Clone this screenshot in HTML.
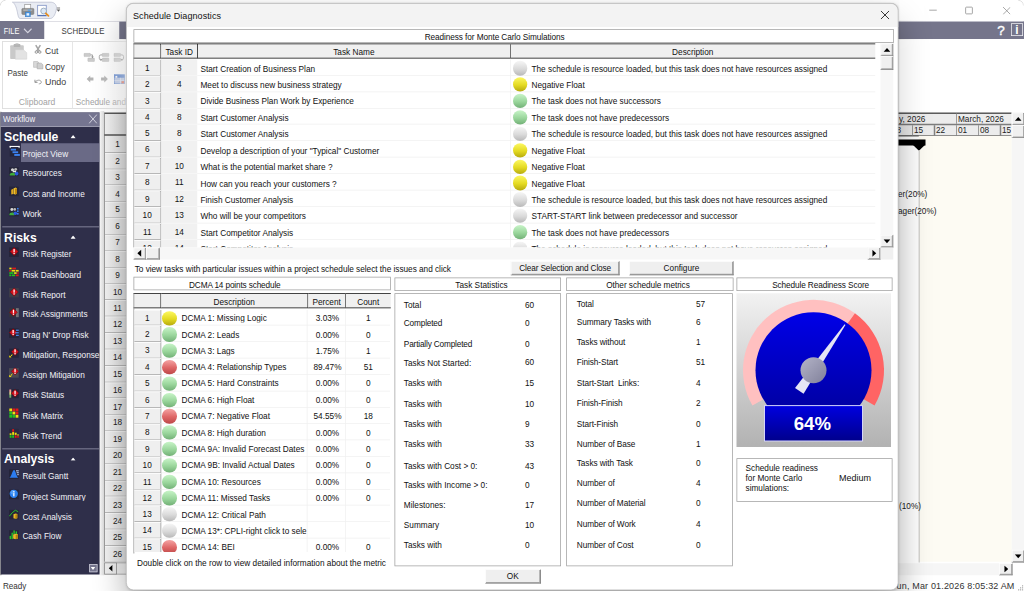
<!DOCTYPE html><html><head><meta charset="utf-8"><title>Schedule Diagnostics</title><style>
*{box-sizing:border-box;margin:0;padding:0}
html,body{width:1024px;height:591px;overflow:hidden;background:#fff}
#root{position:absolute;left:0;top:0;width:1366px;height:788px;transform:scale(0.75);transform-origin:0 0;font-family:"Liberation Sans",sans-serif;font-size:11px;color:#1a1a1a;overflow:hidden;background:#fff}
.a{position:absolute}
.t{position:absolute;white-space:nowrap}
</style></head><body><div id="root">
<div class="a" style="left:0px;top:28px;width:1366.67px;height:24px;background:#75758b"></div>
<div class="a" style="left:58.67px;top:28px;width:100px;height:25px;background:#fff"></div>
<div class="t" style="left:4.8px;top:34.68px;font-size:12.5px;line-height:12.5px;color:#fff;transform:scaleX(0.785);transform-origin:0 50%">FILE</div>
<svg class="a" style="left:31.33px;top:36.67px;" width="12.00" height="8.00" viewBox="0 0 9 6"><path d="M0.7 1 L4.5 5 L8.3 1" fill="none" stroke="#d2d2de" stroke-width="1.1"/></svg>
<div class="t" style="left:81.87px;top:34.68px;font-size:12.5px;line-height:12.5px;color:#3a3a3a;transform:scaleX(0.84);transform-origin:0 50%">SCHEDULE</div>
<div class="t" style="left:1329.73px;top:31.40px;font-size:18px;line-height:18px;color:#fff;-webkit-text-stroke:0.5px #fff">?</div>
<div class="a" style="left:1348px;top:31.07px;width:16px;height:16.8px;border:1px solid #f0f0f4"></div>
<div class="t" style="left:1353.6px;top:32.27px;font-size:16px;line-height:16px;color:#fff;font-weight:bold">i</div>
<div class="a" style="left:58.67px;top:27.6px;width:1306.67px;height:1px;background:#d4d4dc"></div>
<svg class="a" style="left:0px;top:0px;" width="8.00" height="8.00" viewBox="0 0 6 6"><path d="M0.3 5.5 A5.2 5.2 0 0 1 5.5 0.3" fill="none" stroke="#d8d8d8" stroke-width="0.8"/></svg>
<svg class="a" style="left:1357.33px;top:0px;" width="8.00" height="8.00" viewBox="0 0 6 6"><path d="M0.5 0.3 A5.2 5.2 0 0 1 5.7 5.5" fill="none" stroke="#d8d8d8" stroke-width="0.8"/></svg>
<svg class="a" style="left:10.67px;top:0px;" width="80.00" height="28.00" viewBox="0 0 60 21"><path d="M4.2 2.2 H43 C47 2.5 48.6 6 48.2 8.5 C47.6 13 45.5 18.4 42 18.5 H12 C10 18.5 9.8 15 9 11.5 C8 7 6.5 3.2 4.2 2.2 Z" fill="#e9ecf3" stroke="#b4b9cb" stroke-width="0.7"/><rect x="16.5" y="4.6" width="6" height="5" fill="#fff" stroke="#8a8a8a" stroke-width="0.6"/><path d="M13.6 9.4 Q13.6 8.4 14.6 8.4 H24.6 Q25.6 8.4 25.6 9.4 V13.6 Q25.6 14.4 24.8 14.4 H14.4 Q13.6 14.4 13.6 13.6 Z" fill="#8e8e8e" stroke="#6e6e6e" stroke-width="0.5"/><rect x="15" y="9.5" width="9" height="1.3" fill="#b8b8b8"/><rect x="19.5" y="9.6" width="3" height="1.2" fill="#5aa4e8"/><rect x="17" y="12" width="5.2" height="4.8" fill="#4a98e4" stroke="#3070b8" stroke-width="0.4"/><rect x="18.3" y="13.2" width="2.6" height="2.4" fill="#e8f2ff"/><rect x="29.4" y="5.3" width="8.6" height="10.6" fill="#fff" stroke="#7d90c4" stroke-width="0.8"/><rect x="29.4" y="14.9" width="8.6" height="1.1" fill="#5572b4"/><circle cx="35.4" cy="11" r="2.9" fill="#dbe8f6" stroke="#9aaabc" stroke-width="0.9"/><path d="M37.6 13.4 L40.2 15.8" stroke="#e89020" stroke-width="1.8" stroke-linecap="round"/><rect x="48.6" y="7.6" width="3.2" height="0.8" fill="#555"/><path d="M48.4 9.6 H52 L50.2 11.8 Z" fill="#555"/></svg>
<div class="a" style="left:1238.67px;top:13.33px;width:10px;height:1px;background:#8a8a8a"></div>
<div class="a" style="left:1287.07px;top:9.33px;width:10.13px;height:10.13px;border:1px solid #8a8a8a;border-radius:1.5px"></div>
<svg class="a" style="left:1336.67px;top:9.07px;" width="10.67" height="10.67" viewBox="0 0 8 8"><path d="M0.3 0.3 L7.7 7.7 M7.7 0.3 L0.3 7.7" stroke="#8a8a8a" stroke-width="0.75" fill="none"/></svg>
<div class="a" style="left:3.07px;top:55.07px;width:93.6px;height:90px;border:1px solid #d6d6d6;border-right-color:#dedede"></div>
<div class="a" style="left:96.67px;top:55.07px;width:80px;height:90px;border-top:1px solid #d6d6d6;border-bottom:1px solid #d6d6d6"></div>
<svg class="a" style="left:12px;top:57.33px;" width="26.67" height="24.00" viewBox="0 0 20 18"><rect x="1.2" y="2.6" width="13.6" height="13.6" rx="0.8" fill="#c9c9c9"/><rect x="4.6" y="1.2" width="6.8" height="3" rx="0.8" fill="#b4b4b4"/><rect x="6.5" y="0.6" width="3" height="1.4" fill="#bcbcbc"/><path d="M6.3 7 H14.4 L17.8 10 V16.4 H6.3 Z" fill="#e3e3e3" stroke="#cfcfcf" stroke-width="0.5"/></svg>
<svg class="a" style="left:45.33px;top:59.33px;" width="12.00" height="13.33" viewBox="0 0 9 10"><path d="M2 0.8 L5.6 7 M6.6 0.8 L3 7" stroke="#a4a4a4" stroke-width="1.5" fill="none"/><circle cx="2.6" cy="7.8" r="1.25" fill="none" stroke="#8c8c8c" stroke-width="0.9"/><circle cx="6" cy="7.8" r="1.25" fill="none" stroke="#8c8c8c" stroke-width="0.9"/></svg>
<svg class="a" style="left:44px;top:80.67px;" width="14.67" height="12.00" viewBox="0 0 11 9"><path d="M0.6 0.8 H4.6 L6.2 2.3 V6.6 H0.6 Z" fill="#d9d9d9" stroke="#b4b4b4" stroke-width="0.6"/><path d="M4.2 2.4 H8.2 L9.9 4 V8.2 H4.2 Z" fill="#cfcfcf" stroke="#a9a9a9" stroke-width="0.6"/></svg>
<svg class="a" style="left:44.67px;top:104.67px;" width="12.00" height="8.00" viewBox="0 0 9 6"><path d="M1.2 1 V3.6 H3.8" fill="none" stroke="#7a7a7a" stroke-width="0.8"/><path d="M1.4 3.4 C3 1 6.6 0.8 7.4 2.8 C8 4.4 6.6 5.2 5 5.2" fill="none" stroke="#8a8a8a" stroke-width="0.8"/></svg>
<svg class="a" style="left:111.33px;top:70px;" width="16.00" height="14.67" viewBox="0 0 12 11"><rect x="0.7" y="0.8" width="6.4" height="3.3" rx="0.5" fill="#cbcbcb" stroke="#b4b4b4" stroke-width="0.4"/><rect x="4.6" y="5.6" width="6.6" height="3.4" rx="0.5" fill="#cbcbcb" stroke="#b4b4b4" stroke-width="0.4"/><path d="M7.1 2.4 H9.2 V4.4" fill="none" stroke="#9c9c9c" stroke-width="0.9"/><path d="M7.9 4 H10.5 L9.2 5.7 Z" fill="#8c8c8c"/></svg>
<svg class="a" style="left:131.33px;top:70px;" width="16.00" height="14.67" viewBox="0 0 12 11"><rect x="4" y="0.8" width="6.6" height="3.3" rx="0.5" fill="#cbcbcb" stroke="#b4b4b4" stroke-width="0.4"/><rect x="4" y="5.6" width="6.6" height="3.4" rx="0.5" fill="#cbcbcb" stroke="#b4b4b4" stroke-width="0.4"/><path d="M4 2.4 H2.6 Q1 2.4 1 4 V5.8 Q1 7.3 2.6 7.3" fill="none" stroke="#9c9c9c" stroke-width="0.9"/><path d="M2.3 6 V8.6 L4.1 7.3 Z" fill="#8c8c8c"/></svg>
<svg class="a" style="left:151.33px;top:70px;" width="16.00" height="14.67" viewBox="0 0 12 11"><rect x="0.7" y="0.8" width="6.6" height="3.3" rx="0.5" fill="#cbcbcb" stroke="#b4b4b4" stroke-width="0.4"/><rect x="0.7" y="5.6" width="6.6" height="3.4" rx="0.5" fill="#cbcbcb" stroke="#b4b4b4" stroke-width="0.4"/><path d="M7.3 2.4 H8.7 Q10.3 2.4 10.3 4 V5.8 Q10.3 7.3 8.7 7.3" fill="none" stroke="#9c9c9c" stroke-width="0.9"/><path d="M9 6 V8.6 L7.2 7.3 Z" fill="#8c8c8c"/></svg>
<svg class="a" style="left:115.33px;top:100px;" width="10.67" height="10.67" viewBox="0 0 8 8"><path d="M0.4 4 L4 0.6 V2.5 H7.2 V5.5 H4 V7.4 Z" fill="#b4b4b4"/></svg>
<svg class="a" style="left:133.73px;top:100px;" width="10.67" height="10.67" viewBox="0 0 8 8"><path d="M7.4 4 L3.8 0.6 V2.5 H0.6 V5.5 H3.8 V7.4 Z" fill="#b4b4b4"/></svg>
<svg class="a" style="left:152.4px;top:98.67px;" width="14.67" height="13.33" viewBox="0 0 11 10"><rect x="0.3" y="0.3" width="10.2" height="9.2" fill="#b4c4e6" stroke="#4f7cc9" stroke-width="0.6"/><rect x="0.3" y="0.3" width="10.2" height="3.2" fill="#4877cc"/><rect x="1.4" y="1.6" width="1.9" height="1.9" fill="#fff"/><rect x="6" y="3.5" width="0.6" height="6" fill="#e8eefa"/><rect x="0.3" y="6.3" width="10.2" height="0.5" fill="#e8eefa"/><rect x="7.5" y="6.9" width="2.5" height="2.2" fill="#e0644c"/></svg>
<div class="t" style="left:10.4px;top:91.07px;font-size:12px;line-height:12px;color:#3a3a3a;transform:scaleX(0.885);transform-origin:0 50%">Paste</div>
<div class="t" style="left:59.73px;top:61.73px;font-size:12px;line-height:12px;color:#3a3a3a;transform:scaleX(0.953);transform-origin:0 50%">Cut</div>
<div class="t" style="left:59.73px;top:82.53px;font-size:12px;line-height:12px;color:#3a3a3a;transform:scaleX(0.94);transform-origin:0 50%">Copy</div>
<div class="t" style="left:59.73px;top:103.20px;font-size:12px;line-height:12px;color:#3a3a3a;transform:scaleX(0.983);transform-origin:0 50%">Undo</div>
<div class="t" style="left:24.67px;top:129.73px;font-size:12px;line-height:12px;color:#a2a2a2;transform:scaleX(0.948);transform-origin:0 50%">Clipboard</div>
<div class="t" style="left:100.8px;top:129.73px;font-size:12px;line-height:12px;color:#a2a2a2;transform:scaleX(0.913);transform-origin:0 50%">Schedule and</div>
<div class="a" style="left:0px;top:149.33px;width:1.6px;height:617.33px;background:#a4a4a4"></div>
<div class="a" style="left:1.33px;top:150px;width:131.73px;height:616px;background:#2f2f4a"></div>
<div class="a" style="left:1.33px;top:150px;width:131.73px;height:18px;background:#757590"></div>
<div class="a" style="left:1.33px;top:167.87px;width:131.73px;height:1.2px;background:#c2c2d2"></div>
<div class="t" style="left:4px;top:153.83px;font-size:11px;line-height:11px;color:#f4f4f8;transform:scaleX(0.95);transform-origin:0 50%">Workflow</div>
<svg class="a" style="left:118px;top:152px;" width="12.00" height="13.33" viewBox="0 0 9 10"><path d="M0.5 0.5 L8.5 9.5 M8.5 0.5 L0.5 9.5" stroke="#e8e8f0" stroke-width="0.8" fill="none"/></svg>
<div class="t" style="left:5.47px;top:173.98px;font-size:16.3px;line-height:16.3px;color:#fff;font-weight:bold">Schedule</div>
<svg class="a" style="left:93.6px;top:180.4px;" width="6.93" height="4.27" viewBox="0 0 5.2 3.2"><path d="M0 3.2 L2.6 0 L5.2 3.2 Z" fill="#fff"/></svg>
<div class="t" style="left:5.47px;top:307.85px;font-size:16.3px;line-height:16.3px;color:#fff;font-weight:bold">Risks</div>
<svg class="a" style="left:93.6px;top:314.27px;" width="6.93" height="4.27" viewBox="0 0 5.2 3.2"><path d="M0 3.2 L2.6 0 L5.2 3.2 Z" fill="#fff"/></svg>
<div class="t" style="left:5.47px;top:603.45px;font-size:16.3px;line-height:16.3px;color:#fff;font-weight:bold">Analysis</div>
<svg class="a" style="left:93.6px;top:609.87px;" width="6.93" height="4.27" viewBox="0 0 5.2 3.2"><path d="M0 3.2 L2.6 0 L5.2 3.2 Z" fill="#fff"/></svg>
<div class="a" style="left:28.4px;top:190.67px;width:104.93px;height:25.33px;background:#6a6a86"></div>
<div class="a" style="left:2.67px;top:302px;width:129.33px;height:1.2px;background:#9c9cb2"></div>
<div class="a" style="left:2.67px;top:598px;width:129.33px;height:1.2px;background:#9c9cb2"></div>
<div class="t" style="left:29.87px;top:199.57px;font-size:11px;line-height:11px;width:103.2px;color:#f2f2f6;overflow:hidden">Project View</div>
<svg class="a" style="left:11.73px;top:194.23px" width="15" height="15" viewBox="0 0 16 16"><rect x="1" y="3" width="15" height="13" fill="#25253a"/><rect x="1" y="0.5" width="14" height="1.6" fill="#fff"/><rect x="1" y="0.5" width="1.3" height="3.2" fill="#fff"/><rect x="13.7" y="0.5" width="1.3" height="3.2" fill="#fff"/><rect x="2.5" y="4.6" width="7.5" height="2.6" fill="#3c82f0"/><rect x="5" y="8.3" width="8" height="2.6" fill="#3c82f0"/><rect x="7.5" y="12" width="8" height="2.8" fill="#3c82f0"/></svg>
<div class="t" style="left:29.87px;top:226.23px;font-size:11px;line-height:11px;width:103.2px;color:#f2f2f6;overflow:hidden">Resources</div>
<svg class="a" style="left:11.73px;top:221.60px" width="13.6" height="13.6" viewBox="0 0 16 16"><rect x="0" y="1" width="16" height="15" fill="#25253a"/><circle cx="5.5" cy="5" r="2.4" fill="#d8d8d8"/><circle cx="10.5" cy="4.5" r="2.2" fill="#b8b8b8"/><path d="M1 13.5 C1 9 9 8.5 9.5 12 L9.5 14 L1 14 Z" fill="#3fae3a"/><circle cx="12" cy="11" r="3" fill="#2c58e0"/><rect x="6" y="6.5" width="5" height="2.5" fill="#e8e8e8"/></svg>
<div class="t" style="left:29.87px;top:252.90px;font-size:11px;line-height:11px;width:103.2px;color:#f2f2f6;overflow:hidden">Cost and Income</div>
<svg class="a" style="left:11.73px;top:248.27px" width="13.6" height="13.6" viewBox="0 0 16 16"><rect x="0" y="1" width="16" height="15" fill="#25253a"/><path d="M3.5 6 L6.5 4.5 L6.5 12.5 L3.5 13.5 Z" fill="#e0a820"/><path d="M7 4 L10.5 2.5 L12.5 3.5 L12.5 12 L10 13.5 L7 12.5 Z" fill="#f0c030"/><path d="M9.5 4.5 L12.5 3.5 L12.5 12 L9.5 13.5 Z" fill="#b88410"/></svg>
<div class="t" style="left:29.87px;top:279.57px;font-size:11px;line-height:11px;width:103.2px;color:#f2f2f6;overflow:hidden">Work</div>
<svg class="a" style="left:11.73px;top:274.93px" width="13.6" height="13.6" viewBox="0 0 16 16"><rect x="0" y="1" width="16" height="15" fill="#25253a"/><circle cx="4.5" cy="5" r="2.3" fill="#d8d8d8"/><circle cx="9" cy="5" r="2.1" fill="#b8b8b8"/><path d="M0.5 13.5 C0.5 9 8 8.5 8.5 12 L8.5 14 L0.5 14 Z" fill="#3fae3a"/><circle cx="10" cy="11" r="2.8" fill="#2c58e0"/><rect x="12.5" y="2.5" width="3" height="2.6" fill="#3c82f0"/><rect x="12.5" y="6.5" width="3" height="2.6" fill="#3c82f0"/><rect x="12.5" y="10.5" width="3" height="2.6" fill="#3c82f0"/></svg>
<div class="t" style="left:29.87px;top:333.57px;font-size:11px;line-height:11px;width:103.2px;color:#f2f2f6;overflow:hidden">Risk Register</div>
<svg class="a" style="left:11.73px;top:328.93px" width="13.6" height="13.6" viewBox="0 0 16 16"><rect x="0" y="1" width="16" height="15" fill="#25253a"/><path d="M8 1.2000000000000002 L14.3 7.5 L8 13.8 L1.7000000000000002 7.5 Z" fill="#d0101c" stroke="#7a0008" stroke-width="0.8"/><rect x="7" y="3.5" width="2" height="5" fill="#fff"/><rect x="7" y="9.5" width="2" height="2" fill="#fff"/></svg>
<div class="t" style="left:29.87px;top:360.90px;font-size:11px;line-height:11px;width:103.2px;color:#f2f2f6;overflow:hidden">Risk Dashboard</div>
<svg class="a" style="left:11.73px;top:356.27px" width="13.6" height="13.6" viewBox="0 0 16 16"><rect x="0.5" y="1" width="3.5" height="2.6" fill="#f0e010"/><rect x="5" y="1" width="6" height="2.6" fill="#e01818"/><rect x="0.5" y="4.6" width="2.5" height="2.6" fill="#e01818"/><rect x="4" y="4.6" width="6" height="2.6" fill="#f0e010"/><rect x="11" y="4.6" width="4.5" height="2.6" fill="#f0e010"/><rect x="0.5" y="8.2" width="6.5" height="2.6" fill="#20c020"/><rect x="8" y="8.2" width="4" height="2.6" fill="#f0e010"/><rect x="13" y="8.2" width="2.5" height="2.6" fill="#e01818"/><rect x="0.5" y="11.8" width="3" height="2.6" fill="#20c020"/><rect x="4.5" y="11.8" width="5" height="2.6" fill="#20c020"/><rect x="10.5" y="11.8" width="5" height="2.6" fill="#e01818"/></svg>
<div class="t" style="left:29.87px;top:387.57px;font-size:11px;line-height:11px;width:103.2px;color:#f2f2f6;overflow:hidden">Risk Report</div>
<svg class="a" style="left:11.73px;top:382.93px" width="13.6" height="13.6" viewBox="0 0 16 16"><rect x="0" y="1" width="16" height="15" fill="#3c3c48"/><path d="M8 1.2000000000000002 L14.3 7.5 L8 13.8 L1.7000000000000002 7.5 Z" fill="#d0101c" stroke="#7a0008" stroke-width="0.8"/><rect x="7" y="3.5" width="2" height="5" fill="#fff"/><rect x="7" y="9.5" width="2" height="2" fill="#fff"/></svg>
<div class="t" style="left:29.87px;top:414.23px;font-size:11px;line-height:11px;width:103.2px;color:#f2f2f6;overflow:hidden">Risk Assignments</div>
<svg class="a" style="left:11.73px;top:409.60px" width="13.6" height="13.6" viewBox="0 0 16 16"><rect x="0" y="1" width="16" height="15" fill="#34343f"/><rect x="11" y="1" width="5" height="15" fill="#707078"/><path d="M7 1.5 L13 7.5 L7 13.5 L1 7.5 Z" fill="#d0101c" stroke="#7a0008" stroke-width="0.8"/><rect x="6" y="3.5" width="2" height="5" fill="#fff"/><rect x="6" y="9.5" width="2" height="2" fill="#fff"/></svg>
<div class="t" style="left:29.87px;top:441.57px;font-size:11px;line-height:11px;width:103.2px;color:#f2f2f6;overflow:hidden">Drag N' Drop Risk</div>
<svg class="a" style="left:11.73px;top:436.93px" width="13.6" height="13.6" viewBox="0 0 16 16"><rect x="0" y="1" width="16" height="15" fill="#25253a"/><path d="M6.5 1.5 L12.5 7.5 L6.5 13.5 L0.5 7.5 Z" fill="#d0101c" stroke="#7a0008" stroke-width="0.8"/><rect x="5.5" y="3.5" width="2" height="5" fill="#fff"/><rect x="5.5" y="9.5" width="2" height="2" fill="#fff"/><rect x="11" y="3" width="5" height="1.8" fill="#4c8cf4"/><rect x="10" y="7" width="6" height="1.8" fill="#4c8cf4"/><rect x="11" y="11" width="5" height="1.8" fill="#4c8cf4"/></svg>
<div class="t" style="left:29.87px;top:468.23px;font-size:11px;line-height:11px;width:103.2px;color:#f2f2f6;overflow:hidden">Mitigation, Response</div>
<svg class="a" style="left:11.73px;top:463.60px" width="13.6" height="13.6" viewBox="0 0 16 16"><rect x="0" y="1" width="16" height="15" fill="#25253a"/><path d="M9.5 0.40000000000000036 L15.1 6 L9.5 11.6 L3.9000000000000004 6 Z" fill="#d0101c" stroke="#7a0008" stroke-width="0.8"/><rect x="8.5" y="2" width="2" height="5" fill="#fff"/><rect x="8.5" y="8" width="2" height="2" fill="#fff"/><path d="M1 14.5 L6 9.5" stroke="#f0e010" stroke-width="1.6" stroke-dasharray="2 1.2"/><path d="M0.5 11.5 L0.5 15 L4 15 Z" fill="#f0e010"/></svg>
<div class="t" style="left:29.87px;top:494.90px;font-size:11px;line-height:11px;width:103.2px;color:#f2f2f6;overflow:hidden">Assign Mitigation</div>
<svg class="a" style="left:11.73px;top:490.27px" width="13.6" height="13.6" viewBox="0 0 16 16"><rect x="0" y="1" width="16" height="15" fill="#4a4a52"/><path d="M9.5 0.40000000000000036 L15.1 6 L9.5 11.6 L3.9000000000000004 6 Z" fill="#d0101c" stroke="#7a0008" stroke-width="0.8"/><rect x="8.5" y="2" width="2" height="5" fill="#fff"/><rect x="8.5" y="8" width="2" height="2" fill="#fff"/><path d="M1 14.5 L6 9.5" stroke="#f0e010" stroke-width="1.6" stroke-dasharray="2 1.2"/><path d="M0.5 11.5 L0.5 15 L4 15 Z" fill="#f0e010"/></svg>
<div class="t" style="left:29.87px;top:522.23px;font-size:11px;line-height:11px;width:103.2px;color:#f2f2f6;overflow:hidden">Risk Status</div>
<svg class="a" style="left:11.73px;top:517.60px" width="13.6" height="13.6" viewBox="0 0 16 16"><rect x="0" y="1" width="16" height="15" fill="#25253a"/><rect x="0.5" y="1.5" width="3" height="4" fill="#f0a0a0"/><rect x="0.5" y="5.5" width="3" height="4.5" fill="#d8d890"/><rect x="0.5" y="10" width="3" height="4.5" fill="#70b070"/><path d="M9.5 1.5 L15.5 7.5 L9.5 13.5 L3.5 7.5 Z" fill="#d0101c" stroke="#7a0008" stroke-width="0.8"/><rect x="8.5" y="3.5" width="2" height="5" fill="#fff"/><rect x="8.5" y="9.5" width="2" height="2" fill="#fff"/></svg>
<div class="t" style="left:29.87px;top:548.90px;font-size:11px;line-height:11px;width:103.2px;color:#f2f2f6;overflow:hidden">Risk Matrix</div>
<svg class="a" style="left:11.73px;top:544.27px" width="13.6" height="13.6" viewBox="0 0 16 16"><g><rect x="0.5" y="0.8" width="4.4" height="4.4" fill="#f0e010"/><rect x="5.5" y="0.8" width="4.4" height="4.4" fill="#e01818"/><rect x="10.5" y="0.8" width="4.4" height="4.4" fill="#e01818"/><rect x="0.5" y="5.8" width="4.4" height="4.4" fill="#20c020"/><rect x="5.5" y="5.8" width="4.4" height="4.4" fill="#f0e010"/><rect x="10.5" y="5.8" width="4.4" height="4.4" fill="#e01818"/><rect x="0.5" y="10.8" width="4.4" height="4.4" fill="#20c020"/><rect x="5.5" y="10.8" width="4.4" height="4.4" fill="#20c020"/><rect x="10.5" y="10.8" width="4.4" height="4.4" fill="#f0e010"/></g></svg>
<div class="t" style="left:29.87px;top:575.57px;font-size:11px;line-height:11px;width:103.2px;color:#f2f2f6;overflow:hidden">Risk Trend</div>
<svg class="a" style="left:11.73px;top:570.93px" width="13.6" height="13.6" viewBox="0 0 16 16"><rect x="0" y="1" width="16" height="15" fill="#2a2a40"/><rect x="1" y="11" width="3" height="4" fill="#20c020"/><rect x="1" y="8" width="3" height="2.4" fill="#f0e010"/><rect x="5" y="11" width="3" height="4" fill="#20c020"/><rect x="5" y="6" width="3" height="4.4" fill="#f0e010"/><rect x="5" y="1.5" width="3" height="4" fill="#e01818"/><rect x="9" y="11" width="3" height="4" fill="#e01818"/><rect x="9" y="7" width="3" height="3.4" fill="#f0e010"/><rect x="13" y="12" width="3" height="3" fill="#e01818"/><rect x="13" y="9.5" width="3" height="2" fill="#f0e010"/></svg>
<div class="t" style="left:29.87px;top:629.57px;font-size:11px;line-height:11px;width:103.2px;color:#f2f2f6;overflow:hidden">Result Gantt</div>
<svg class="a" style="left:11.73px;top:624.93px" width="13.6" height="13.6" viewBox="0 0 16 16"><rect x="0" y="1" width="16" height="15" fill="#25253a"/><path d="M0.5 14 C4 13.5 5 2 8 2 C10.5 2 11.5 13.5 15 14 Z" fill="#2c7cf0"/><rect x="11" y="2.5" width="5" height="1.6" fill="#cfe0ff"/><rect x="12" y="5.5" width="4" height="1.6" fill="#cfe0ff"/><rect x="13" y="8.5" width="3" height="1.6" fill="#cfe0ff"/></svg>
<div class="t" style="left:29.87px;top:656.90px;font-size:11px;line-height:11px;width:103.2px;color:#f2f2f6;overflow:hidden">Project Summary</div>
<svg class="a" style="left:11.73px;top:652.27px" width="13.6" height="13.6" viewBox="0 0 16 16"><rect x="0" y="1" width="16" height="15" fill="#25253a"/><circle cx="7.5" cy="7.5" r="6.5" fill="#2a80f0"/><circle cx="6" cy="5" r="3.5" fill="#6ab0ff" opacity="0.6"/><rect x="6.6" y="6.5" width="2" height="5" fill="#fff"/><rect x="6.6" y="3.3" width="2" height="2" fill="#fff"/></svg>
<div class="t" style="left:29.87px;top:683.57px;font-size:11px;line-height:11px;width:103.2px;color:#f2f2f6;overflow:hidden">Cost Analysis</div>
<svg class="a" style="left:11.73px;top:678.93px" width="13.6" height="13.6" viewBox="0 0 16 16"><rect x="0" y="1" width="16" height="15" fill="#25253a"/><path d="M7 8 L10.5 6.5 L13 7.5 L13 14 L10 15 L7 14 Z" fill="#e8b828"/><path d="M10 8.5 L13 7.5 L13 14 L10 15 Z" fill="#b08010"/><path d="M0.5 11 L5 5.5 L10 1.5 L14.5 4" fill="none" stroke="#28c828" stroke-width="1.5"/></svg>
<div class="t" style="left:29.87px;top:710.23px;font-size:11px;line-height:11px;width:103.2px;color:#f2f2f6;overflow:hidden">Cash Flow</div>
<svg class="a" style="left:11.73px;top:705.60px" width="13.6" height="13.6" viewBox="0 0 16 16"><rect x="0" y="1" width="16" height="15" fill="#25253a"/><rect x="1" y="10" width="2" height="5.5" fill="#28d028"/><rect x="4" y="5" width="2" height="10.5" fill="#28d028"/><rect x="7" y="1.5" width="2" height="6" fill="#28d028"/><rect x="10.5" y="3" width="2" height="4" fill="#28d028"/><path d="M6.5 8 L10.5 6.5 L14 7.5 L14 14 L10.5 15.5 L6.5 14 Z" fill="#e8b828"/><path d="M10.5 8.5 L14 7.5 L14 14 L10.5 15.5 Z" fill="#b08010"/></svg>
<div class="a" style="left:118.67px;top:752px;width:11.33px;height:11.33px;background:#75758e;border:1px solid #d0d0dc"></div>
<svg class="a" style="left:121.33px;top:756px;" width="6.00" height="4.00" viewBox="0 0 4.5 3"><path d="M0 0 L4.5 0 L2.25 3 Z" fill="#fff"/></svg>
<div class="a" style="left:133.07px;top:148px;width:5.6px;height:618.67px;background:linear-gradient(90deg,#fafafa,#dadada)"></div>
<div class="a" style="left:138.67px;top:150px;width:32px;height:599.33px;background:linear-gradient(90deg,#f4f4f4,#e0e0e0);border-left:1px solid #808080;border-top:2px solid #5a5a5a"></div>
<div class="a" style="left:138.67px;top:179.33px;width:32px;height:1.6px;background:#555"></div>
<div class="t" style="left:142.4px;top:187.10px;font-size:11px;line-height:11px;width:28.67px;text-align:center;color:#222">1</div>
<div class="a" style="left:140px;top:202.8px;width:30.67px;height:1px;background:#a8a8a8"></div>
<div class="a" style="left:140px;top:203.8px;width:30.67px;height:1px;background:#fff"></div>
<div class="t" style="left:142.4px;top:208.94px;font-size:11px;line-height:11px;width:28.67px;text-align:center;color:#222">2</div>
<div class="a" style="left:140px;top:224.64px;width:30.67px;height:1px;background:#a8a8a8"></div>
<div class="a" style="left:140px;top:225.64px;width:30.67px;height:1px;background:#fff"></div>
<div class="t" style="left:142.4px;top:230.78px;font-size:11px;line-height:11px;width:28.67px;text-align:center;color:#222">3</div>
<div class="a" style="left:140px;top:246.48px;width:30.67px;height:1px;background:#a8a8a8"></div>
<div class="a" style="left:140px;top:247.48px;width:30.67px;height:1px;background:#fff"></div>
<div class="t" style="left:142.4px;top:252.62px;font-size:11px;line-height:11px;width:28.67px;text-align:center;color:#222">4</div>
<div class="a" style="left:140px;top:268.32px;width:30.67px;height:1px;background:#a8a8a8"></div>
<div class="a" style="left:140px;top:269.32px;width:30.67px;height:1px;background:#fff"></div>
<div class="t" style="left:142.4px;top:274.46px;font-size:11px;line-height:11px;width:28.67px;text-align:center;color:#222">5</div>
<div class="a" style="left:140px;top:290.16px;width:30.67px;height:1px;background:#a8a8a8"></div>
<div class="a" style="left:140px;top:291.16px;width:30.67px;height:1px;background:#fff"></div>
<div class="t" style="left:142.4px;top:296.30px;font-size:11px;line-height:11px;width:28.67px;text-align:center;color:#222">6</div>
<div class="a" style="left:140px;top:312px;width:30.67px;height:1px;background:#a8a8a8"></div>
<div class="a" style="left:140px;top:313px;width:30.67px;height:1px;background:#fff"></div>
<div class="t" style="left:142.4px;top:318.14px;font-size:11px;line-height:11px;width:28.67px;text-align:center;color:#222">7</div>
<div class="a" style="left:140px;top:333.84px;width:30.67px;height:1px;background:#a8a8a8"></div>
<div class="a" style="left:140px;top:334.84px;width:30.67px;height:1px;background:#fff"></div>
<div class="t" style="left:142.4px;top:339.98px;font-size:11px;line-height:11px;width:28.67px;text-align:center;color:#222">8</div>
<div class="a" style="left:140px;top:355.68px;width:30.67px;height:1px;background:#a8a8a8"></div>
<div class="a" style="left:140px;top:356.68px;width:30.67px;height:1px;background:#fff"></div>
<div class="t" style="left:142.4px;top:361.82px;font-size:11px;line-height:11px;width:28.67px;text-align:center;color:#222">9</div>
<div class="a" style="left:140px;top:377.52px;width:30.67px;height:1px;background:#a8a8a8"></div>
<div class="a" style="left:140px;top:378.52px;width:30.67px;height:1px;background:#fff"></div>
<div class="t" style="left:142.4px;top:383.66px;font-size:11px;line-height:11px;width:28.67px;text-align:center;color:#222">10</div>
<div class="a" style="left:140px;top:399.36px;width:30.67px;height:1px;background:#a8a8a8"></div>
<div class="a" style="left:140px;top:400.36px;width:30.67px;height:1px;background:#fff"></div>
<div class="t" style="left:142.4px;top:405.50px;font-size:11px;line-height:11px;width:28.67px;text-align:center;color:#222">11</div>
<div class="a" style="left:140px;top:421.2px;width:30.67px;height:1px;background:#a8a8a8"></div>
<div class="a" style="left:140px;top:422.2px;width:30.67px;height:1px;background:#fff"></div>
<div class="t" style="left:142.4px;top:427.34px;font-size:11px;line-height:11px;width:28.67px;text-align:center;color:#222">12</div>
<div class="a" style="left:140px;top:443.04px;width:30.67px;height:1px;background:#a8a8a8"></div>
<div class="a" style="left:140px;top:444.04px;width:30.67px;height:1px;background:#fff"></div>
<div class="t" style="left:142.4px;top:449.18px;font-size:11px;line-height:11px;width:28.67px;text-align:center;color:#222">13</div>
<div class="a" style="left:140px;top:464.88px;width:30.67px;height:1px;background:#a8a8a8"></div>
<div class="a" style="left:140px;top:465.88px;width:30.67px;height:1px;background:#fff"></div>
<div class="t" style="left:142.4px;top:471.02px;font-size:11px;line-height:11px;width:28.67px;text-align:center;color:#222">14</div>
<div class="a" style="left:140px;top:486.72px;width:30.67px;height:1px;background:#a8a8a8"></div>
<div class="a" style="left:140px;top:487.72px;width:30.67px;height:1px;background:#fff"></div>
<div class="t" style="left:142.4px;top:492.86px;font-size:11px;line-height:11px;width:28.67px;text-align:center;color:#222">15</div>
<div class="a" style="left:140px;top:508.56px;width:30.67px;height:1px;background:#a8a8a8"></div>
<div class="a" style="left:140px;top:509.56px;width:30.67px;height:1px;background:#fff"></div>
<div class="t" style="left:142.4px;top:514.70px;font-size:11px;line-height:11px;width:28.67px;text-align:center;color:#222">16</div>
<div class="a" style="left:140px;top:530.4px;width:30.67px;height:1px;background:#a8a8a8"></div>
<div class="a" style="left:140px;top:531.4px;width:30.67px;height:1px;background:#fff"></div>
<div class="t" style="left:142.4px;top:536.54px;font-size:11px;line-height:11px;width:28.67px;text-align:center;color:#222">17</div>
<div class="a" style="left:140px;top:552.24px;width:30.67px;height:1px;background:#a8a8a8"></div>
<div class="a" style="left:140px;top:553.24px;width:30.67px;height:1px;background:#fff"></div>
<div class="t" style="left:142.4px;top:558.38px;font-size:11px;line-height:11px;width:28.67px;text-align:center;color:#222">18</div>
<div class="a" style="left:140px;top:574.08px;width:30.67px;height:1px;background:#a8a8a8"></div>
<div class="a" style="left:140px;top:575.08px;width:30.67px;height:1px;background:#fff"></div>
<div class="t" style="left:142.4px;top:580.22px;font-size:11px;line-height:11px;width:28.67px;text-align:center;color:#222">19</div>
<div class="a" style="left:140px;top:595.92px;width:30.67px;height:1px;background:#a8a8a8"></div>
<div class="a" style="left:140px;top:596.92px;width:30.67px;height:1px;background:#fff"></div>
<div class="t" style="left:142.4px;top:602.06px;font-size:11px;line-height:11px;width:28.67px;text-align:center;color:#222">20</div>
<div class="a" style="left:140px;top:617.76px;width:30.67px;height:1px;background:#a8a8a8"></div>
<div class="a" style="left:140px;top:618.76px;width:30.67px;height:1px;background:#fff"></div>
<div class="t" style="left:142.4px;top:623.90px;font-size:11px;line-height:11px;width:28.67px;text-align:center;color:#222">21</div>
<div class="a" style="left:140px;top:639.6px;width:30.67px;height:1px;background:#a8a8a8"></div>
<div class="a" style="left:140px;top:640.6px;width:30.67px;height:1px;background:#fff"></div>
<div class="t" style="left:142.4px;top:645.74px;font-size:11px;line-height:11px;width:28.67px;text-align:center;color:#222">22</div>
<div class="a" style="left:140px;top:661.44px;width:30.67px;height:1px;background:#a8a8a8"></div>
<div class="a" style="left:140px;top:662.44px;width:30.67px;height:1px;background:#fff"></div>
<div class="t" style="left:142.4px;top:667.58px;font-size:11px;line-height:11px;width:28.67px;text-align:center;color:#222">23</div>
<div class="a" style="left:140px;top:683.28px;width:30.67px;height:1px;background:#a8a8a8"></div>
<div class="a" style="left:140px;top:684.28px;width:30.67px;height:1px;background:#fff"></div>
<div class="t" style="left:142.4px;top:689.42px;font-size:11px;line-height:11px;width:28.67px;text-align:center;color:#222">24</div>
<div class="a" style="left:140px;top:705.12px;width:30.67px;height:1px;background:#a8a8a8"></div>
<div class="a" style="left:140px;top:706.12px;width:30.67px;height:1px;background:#fff"></div>
<div class="t" style="left:142.4px;top:711.26px;font-size:11px;line-height:11px;width:28.67px;text-align:center;color:#222">25</div>
<div class="a" style="left:140px;top:726.96px;width:30.67px;height:1px;background:#a8a8a8"></div>
<div class="a" style="left:140px;top:727.96px;width:30.67px;height:1px;background:#fff"></div>
<div class="t" style="left:142.4px;top:733.10px;font-size:11px;line-height:11px;width:28.67px;text-align:center;color:#222">26</div>
<div class="a" style="left:140px;top:748.8px;width:30.67px;height:1px;background:#a8a8a8"></div>
<div class="a" style="left:140px;top:749.8px;width:30.67px;height:1px;background:#fff"></div>
<div class="a" style="left:138.67px;top:749.6px;width:32px;height:16.4px;background:#f0f0f0;border:1px solid #a0a0a0"></div>
<div class="a" style="left:138.67px;top:749.6px;width:17.73px;height:16.4px;background:#f0f0f0;border:1px solid #8a8a8a"></div>
<svg class="a" style="left:144.67px;top:753.33px;" width="5.33" height="9.33" viewBox="0 0 4 7"><path d="M4 0 L0 3.5 L4 7 Z" fill="#000"/></svg>
<div class="a" style="left:1194.67px;top:150px;width:154.67px;height:31.6px;background:#ececec;border-top:2px solid #5c5c5c;border-bottom:2px solid #6a6a6a"></div>
<div class="a" style="left:1194.67px;top:165.33px;width:154.67px;height:1.2px;background:#7c7c7c"></div>
<div class="a" style="left:1224.67px;top:181.33px;width:124.67px;height:568px;background:#fdfbf3"></div>
<div class="t" style="left:1198.67px;top:152.50px;font-size:11px;line-height:11px;color:#222">y, 2026</div>
<div class="t" style="left:1277.33px;top:152.50px;font-size:11px;line-height:11px;color:#222">March, 2026</div>
<div class="a" style="left:1274.67px;top:151.33px;width:1.2px;height:14px;background:#808080"></div>
<div class="t" style="left:1195.47px;top:167.83px;font-size:11px;line-height:11px;color:#222">8</div>
<div class="t" style="left:1218.67px;top:167.83px;font-size:11px;line-height:11px;color:#222">15</div>
<div class="t" style="left:1248px;top:167.83px;font-size:11px;line-height:11px;color:#222">22</div>
<div class="t" style="left:1277.33px;top:167.83px;font-size:11px;line-height:11px;color:#222">01</div>
<div class="t" style="left:1306.67px;top:167.83px;font-size:11px;line-height:11px;color:#222">08</div>
<div class="t" style="left:1336px;top:167.83px;font-size:11px;line-height:11px;color:#222">15</div>
<div class="a" style="left:1216px;top:166.67px;width:1.2px;height:14px;background:#808080"></div>
<div class="a" style="left:1245.33px;top:166.67px;width:1.2px;height:14px;background:#808080"></div>
<div class="a" style="left:1274.67px;top:166.67px;width:1.2px;height:14px;background:#808080"></div>
<div class="a" style="left:1304px;top:166.67px;width:1.2px;height:14px;background:#808080"></div>
<div class="a" style="left:1333.33px;top:166.67px;width:1.2px;height:14px;background:#808080"></div>
<div class="a" style="left:1194.67px;top:186.13px;width:38.93px;height:7.47px;background:#000"></div>
<svg class="a" style="left:1217.33px;top:193.33px;" width="16.53" height="8.00" viewBox="0 0 12.4 6"><path d="M0 0 H12.4 L6.2 6 Z" fill="#000"/></svg>
<div class="a" style="left:1225.07px;top:201.33px;width:1px;height:548.67px;background:#b0b0b0"></div>
<div class="t" style="left:1197.33px;top:253.17px;font-size:11px;line-height:11px;color:#222">er(20%)</div>
<div class="t" style="left:1197.33px;top:275.83px;font-size:11px;line-height:11px;color:#222">ager(20%)</div>
<div class="t" style="left:1198.67px;top:668.63px;font-size:11px;line-height:11px;color:#222">(10%)</div>
<div class="a" style="left:1349.33px;top:150px;width:16.67px;height:600px;background:#f6f6f6"></div>
<div class="a" style="left:1349.33px;top:150px;width:16.67px;height:16.67px;background:#f0f0f0;border:1px solid #fff;border-right-color:#777;border-bottom-color:#777;box-shadow:inset -1px -1px 0 #a8a8a8"></div>
<svg class="a" style="left:1353.07px;top:156px;" width="9.33" height="5.33" viewBox="0 0 7 4"><path d="M0 4 L3.5 0 L7 4 Z" fill="#000"/></svg>
<div class="a" style="left:1349.33px;top:166.67px;width:16.67px;height:17.33px;background:#f0f0f0;border:1px solid #fff;border-right-color:#777;border-bottom-color:#777;box-shadow:inset -1px -1px 0 #a8a8a8"></div>
<div class="a" style="left:1349.33px;top:733.33px;width:16.67px;height:16.53px;background:#f0f0f0;border:1px solid #fff;border-right-color:#777;border-bottom-color:#777;box-shadow:inset -1px -1px 0 #a8a8a8"></div>
<svg class="a" style="left:1353.07px;top:739.47px;" width="9.33" height="5.33" viewBox="0 0 7 4"><path d="M0 0 L3.5 4 L7 0 Z" fill="#000"/></svg>
<div class="a" style="left:1194.67px;top:750.67px;width:154.67px;height:16px;background:#f6f6f6"></div>
<div class="a" style="left:1332.27px;top:750.67px;width:17.33px;height:16px;background:#f0f0f0;border:1px solid #fff;border-right-color:#777;border-bottom-color:#777;box-shadow:inset -1px -1px 0 #a8a8a8"></div>
<svg class="a" style="left:1338.67px;top:754.13px;" width="5.33" height="9.33" viewBox="0 0 4 7"><path d="M0 0 L4 3.5 L0 7 Z" fill="#000"/></svg>
<div class="t" style="left:3.87px;top:775.07px;font-size:12px;line-height:12px;color:#333;transform:scaleX(0.9);transform-origin:0 50%">Ready</div>
<div class="t" style="left:1195.47px;top:774.53px;font-size:12px;line-height:12px;color:#333;letter-spacing:0.22px">un, Mar 01.2026 8:05:32 AM</div>
<svg class="a" style="left:1356px;top:778.67px;" width="9.33" height="9.33" viewBox="0 0 7 7"><rect x="5" y="1" width="1.2" height="1.2" fill="#aaa"/><rect x="3" y="3" width="1.2" height="1.2" fill="#aaa"/><rect x="5" y="3" width="1.2" height="1.2" fill="#aaa"/><rect x="1" y="5" width="1.2" height="1.2" fill="#aaa"/><rect x="3" y="5" width="1.2" height="1.2" fill="#aaa"/><rect x="5" y="5" width="1.2" height="1.2" fill="#aaa"/></svg>
<div class="a" style="left:168.27px;top:4.27px;width:1029.87px;height:782.53px;background:#fff;border:1px solid #bdbdbd;border-radius:10px;box-shadow:0 22px 44px rgba(0,0,0,0.33),0 0 3px rgba(0,0,0,0.14);overflow:hidden"></div>
<div class="a" style="left:168.27px;top:4.27px;width:1029.87px;height:31.47px;background:#f3f3f3;border:1px solid #bdbdbd;border-bottom:none;border-radius:10px 10px 0 0"></div>
<div class="a" style="left:133.33px;top:53.07px;width:34.93px;height:95.6px;background:linear-gradient(90deg,rgba(255,255,255,0),rgba(255,255,255,0.45))"></div>
<div class="a" style="left:1198.67px;top:53.07px;width:80px;height:95.6px;background:rgba(255,255,255,0.5)"></div>
<div class="a" style="left:1198.67px;top:0px;width:34.67px;height:27.33px;background:rgba(255,255,255,0.5)"></div>
<div class="t" style="left:177.33px;top:14.67px;font-size:12px;line-height:12px;color:#111;letter-spacing:0.1px">Schedule Diagnostics</div>
<svg class="a" style="left:1174px;top:14px;" width="12.00" height="12.00" viewBox="0 0 9 9"><path d="M0.4 0.4 L8.6 8.6 M8.6 0.4 L0.4 8.6" stroke="#222" stroke-width="0.9" fill="none"/></svg>
<div class="a" style="left:178px;top:39.07px;width:1014px;height:18px;border:1px solid #a0a0a0;background:#fff"></div>
<div class="t" style="left:459.47px;top:44.30px;font-size:11px;line-height:11px;width:400px;text-align:center;color:#111;letter-spacing:-0.12px;">Readiness for Monte Carlo Simulations</div>
<div class="a" style="left:178px;top:58px;width:36.93px;height:20.27px;background:#f0f0f0;border-top:1px solid #0a0a0a;border-bottom:1px solid #0a0a0a;border-right:1px solid #111;text-align:center;font-size:11px;line-height:20.5px;color:#111"></div>
<div class="a" style="left:214.93px;top:58px;width:49.07px;height:20.27px;background:#f0f0f0;border-top:1px solid #0a0a0a;border-bottom:1px solid #0a0a0a;border-right:1px solid #111;text-align:center;font-size:11px;line-height:20.5px;color:#111">Task ID</div>
<div class="a" style="left:264px;top:58px;width:416.67px;height:20.27px;background:#f0f0f0;border-top:1px solid #0a0a0a;border-bottom:1px solid #0a0a0a;border-right:1px solid #111;text-align:center;font-size:11px;line-height:20.5px;color:#111">Task Name</div>
<div class="a" style="left:680.67px;top:58px;width:486px;height:20.27px;background:#f0f0f0;border-top:1px solid #0a0a0a;border-bottom:1px solid #0a0a0a;border-right:none;text-align:center;font-size:11px;line-height:20.5px;color:#111">Description</div>
<div class="a" style="left:178px;top:58px;width:1px;height:273.33px;background:#8c8c8c"></div>
<div class="a" style="left:178.67px;top:79px;width:990.67px;height:251px;overflow:hidden">
<div class="a" style="left:0;top:0.00px;width:36.27px;height:21.87px;background:#efefef;border-right:1px solid #9a9a9a;border-bottom:1px solid #a4a4a4;border-top:1px solid #fff;text-align:center;font-size:11px;line-height:20px;color:#111">1</div>
<div class="a" style="left:36.27px;top:0.00px;width:48.4px;height:21.87px;background:#f1f1f1;border-bottom:1px solid #f7f7f7;text-align:center;font-size:11px;line-height:23.5px;color:#111">3</div>
<div class="a" style="left:84.67px;top:20.87px;width:903.33px;height:1px;background:#f0f0f0"></div>
<div class="t" style="left:88.67px;top:6.50px;font-size:11px;line-height:12px;color:#111">Start Creation of Business Plan</div>
<div class="t" style="left:530px;top:6.50px;font-size:11px;line-height:12px;color:#111">The schedule is resource loaded, but this task does not have resources assigned</div>
<div class="a" style="left:0;top:21.87px;width:36.27px;height:21.87px;background:#efefef;border-right:1px solid #9a9a9a;border-bottom:1px solid #a4a4a4;border-top:1px solid #fff;text-align:center;font-size:11px;line-height:20px;color:#111">2</div>
<div class="a" style="left:36.27px;top:21.87px;width:48.4px;height:21.87px;background:#f1f1f1;border-bottom:1px solid #f7f7f7;text-align:center;font-size:11px;line-height:23.5px;color:#111">4</div>
<div class="a" style="left:84.67px;top:42.73px;width:903.33px;height:1px;background:#f0f0f0"></div>
<div class="t" style="left:88.67px;top:28.37px;font-size:11px;line-height:12px;color:#111">Meet to discuss new business strategy</div>
<div class="t" style="left:530px;top:28.37px;font-size:11px;line-height:12px;color:#111">Negative Float</div>
<div class="a" style="left:0;top:43.73px;width:36.27px;height:21.87px;background:#efefef;border-right:1px solid #9a9a9a;border-bottom:1px solid #a4a4a4;border-top:1px solid #fff;text-align:center;font-size:11px;line-height:20px;color:#111">3</div>
<div class="a" style="left:36.27px;top:43.73px;width:48.4px;height:21.87px;background:#f1f1f1;border-bottom:1px solid #f7f7f7;text-align:center;font-size:11px;line-height:23.5px;color:#111">5</div>
<div class="a" style="left:84.67px;top:64.60px;width:903.33px;height:1px;background:#f0f0f0"></div>
<div class="t" style="left:88.67px;top:50.23px;font-size:11px;line-height:12px;color:#111">Divide Business Plan Work by Experience</div>
<div class="t" style="left:530px;top:50.23px;font-size:11px;line-height:12px;color:#111">The task does not have successors</div>
<div class="a" style="left:0;top:65.60px;width:36.27px;height:21.87px;background:#efefef;border-right:1px solid #9a9a9a;border-bottom:1px solid #a4a4a4;border-top:1px solid #fff;text-align:center;font-size:11px;line-height:20px;color:#111">4</div>
<div class="a" style="left:36.27px;top:65.60px;width:48.4px;height:21.87px;background:#f1f1f1;border-bottom:1px solid #f7f7f7;text-align:center;font-size:11px;line-height:23.5px;color:#111">8</div>
<div class="a" style="left:84.67px;top:86.47px;width:903.33px;height:1px;background:#f0f0f0"></div>
<div class="t" style="left:88.67px;top:72.10px;font-size:11px;line-height:12px;color:#111">Start Customer Analysis</div>
<div class="t" style="left:530px;top:72.10px;font-size:11px;line-height:12px;color:#111">The task does not have predecessors</div>
<div class="a" style="left:0;top:87.47px;width:36.27px;height:21.87px;background:#efefef;border-right:1px solid #9a9a9a;border-bottom:1px solid #a4a4a4;border-top:1px solid #fff;text-align:center;font-size:11px;line-height:20px;color:#111">5</div>
<div class="a" style="left:36.27px;top:87.47px;width:48.4px;height:21.87px;background:#f1f1f1;border-bottom:1px solid #f7f7f7;text-align:center;font-size:11px;line-height:23.5px;color:#111">8</div>
<div class="a" style="left:84.67px;top:108.33px;width:903.33px;height:1px;background:#f0f0f0"></div>
<div class="t" style="left:88.67px;top:93.97px;font-size:11px;line-height:12px;color:#111">Start Customer Analysis</div>
<div class="t" style="left:530px;top:93.97px;font-size:11px;line-height:12px;color:#111">The schedule is resource loaded, but this task does not have resources assigned</div>
<div class="a" style="left:0;top:109.33px;width:36.27px;height:21.87px;background:#efefef;border-right:1px solid #9a9a9a;border-bottom:1px solid #a4a4a4;border-top:1px solid #fff;text-align:center;font-size:11px;line-height:20px;color:#111">6</div>
<div class="a" style="left:36.27px;top:109.33px;width:48.4px;height:21.87px;background:#f1f1f1;border-bottom:1px solid #f7f7f7;text-align:center;font-size:11px;line-height:23.5px;color:#111">9</div>
<div class="a" style="left:84.67px;top:130.20px;width:903.33px;height:1px;background:#f0f0f0"></div>
<div class="t" style="left:88.67px;top:115.83px;font-size:11px;line-height:12px;color:#111">Develop a description of your "Typical" Customer</div>
<div class="t" style="left:530px;top:115.83px;font-size:11px;line-height:12px;color:#111">Negative Float</div>
<div class="a" style="left:0;top:131.20px;width:36.27px;height:21.87px;background:#efefef;border-right:1px solid #9a9a9a;border-bottom:1px solid #a4a4a4;border-top:1px solid #fff;text-align:center;font-size:11px;line-height:20px;color:#111">7</div>
<div class="a" style="left:36.27px;top:131.20px;width:48.4px;height:21.87px;background:#f1f1f1;border-bottom:1px solid #f7f7f7;text-align:center;font-size:11px;line-height:23.5px;color:#111">10</div>
<div class="a" style="left:84.67px;top:152.07px;width:903.33px;height:1px;background:#f0f0f0"></div>
<div class="t" style="left:88.67px;top:137.70px;font-size:11px;line-height:12px;color:#111">What is the potential market share ?</div>
<div class="t" style="left:530px;top:137.70px;font-size:11px;line-height:12px;color:#111">Negative Float</div>
<div class="a" style="left:0;top:153.07px;width:36.27px;height:21.87px;background:#efefef;border-right:1px solid #9a9a9a;border-bottom:1px solid #a4a4a4;border-top:1px solid #fff;text-align:center;font-size:11px;line-height:20px;color:#111">8</div>
<div class="a" style="left:36.27px;top:153.07px;width:48.4px;height:21.87px;background:#f1f1f1;border-bottom:1px solid #f7f7f7;text-align:center;font-size:11px;line-height:23.5px;color:#111">11</div>
<div class="a" style="left:84.67px;top:173.93px;width:903.33px;height:1px;background:#f0f0f0"></div>
<div class="t" style="left:88.67px;top:159.57px;font-size:11px;line-height:12px;color:#111">How can you reach your customers ?</div>
<div class="t" style="left:530px;top:159.57px;font-size:11px;line-height:12px;color:#111">Negative Float</div>
<div class="a" style="left:0;top:174.93px;width:36.27px;height:21.87px;background:#efefef;border-right:1px solid #9a9a9a;border-bottom:1px solid #a4a4a4;border-top:1px solid #fff;text-align:center;font-size:11px;line-height:20px;color:#111">9</div>
<div class="a" style="left:36.27px;top:174.93px;width:48.4px;height:21.87px;background:#f1f1f1;border-bottom:1px solid #f7f7f7;text-align:center;font-size:11px;line-height:23.5px;color:#111">12</div>
<div class="a" style="left:84.67px;top:195.80px;width:903.33px;height:1px;background:#f0f0f0"></div>
<div class="t" style="left:88.67px;top:181.43px;font-size:11px;line-height:12px;color:#111">Finish Customer Analysis</div>
<div class="t" style="left:530px;top:181.43px;font-size:11px;line-height:12px;color:#111">The schedule is resource loaded, but this task does not have resources assigned</div>
<div class="a" style="left:0;top:196.80px;width:36.27px;height:21.87px;background:#efefef;border-right:1px solid #9a9a9a;border-bottom:1px solid #a4a4a4;border-top:1px solid #fff;text-align:center;font-size:11px;line-height:20px;color:#111">10</div>
<div class="a" style="left:36.27px;top:196.80px;width:48.4px;height:21.87px;background:#f1f1f1;border-bottom:1px solid #f7f7f7;text-align:center;font-size:11px;line-height:23.5px;color:#111">13</div>
<div class="a" style="left:84.67px;top:217.67px;width:903.33px;height:1px;background:#f0f0f0"></div>
<div class="t" style="left:88.67px;top:203.30px;font-size:11px;line-height:12px;color:#111">Who will be your competitors</div>
<div class="t" style="left:530px;top:203.30px;font-size:11px;line-height:12px;color:#111">START-START link between predecessor and successor</div>
<div class="a" style="left:0;top:218.67px;width:36.27px;height:21.87px;background:#efefef;border-right:1px solid #9a9a9a;border-bottom:1px solid #a4a4a4;border-top:1px solid #fff;text-align:center;font-size:11px;line-height:20px;color:#111">11</div>
<div class="a" style="left:36.27px;top:218.67px;width:48.4px;height:21.87px;background:#f1f1f1;border-bottom:1px solid #f7f7f7;text-align:center;font-size:11px;line-height:23.5px;color:#111">14</div>
<div class="a" style="left:84.67px;top:239.53px;width:903.33px;height:1px;background:#f0f0f0"></div>
<div class="t" style="left:88.67px;top:225.17px;font-size:11px;line-height:12px;color:#111">Start Competitor Analysis</div>
<div class="t" style="left:530px;top:225.17px;font-size:11px;line-height:12px;color:#111">The task does not have predecessors</div>
<div class="a" style="left:0;top:240.53px;width:36.27px;height:21.87px;background:#efefef;border-right:1px solid #9a9a9a;border-bottom:1px solid #a4a4a4;border-top:1px solid #fff;text-align:center;font-size:11px;line-height:20px;color:#111">12</div>
<div class="a" style="left:36.27px;top:240.53px;width:48.4px;height:21.87px;background:#f1f1f1;border-bottom:1px solid #f7f7f7;text-align:center;font-size:11px;line-height:23.5px;color:#111">14</div>
<div class="a" style="left:84.67px;top:261.40px;width:903.33px;height:1px;background:#f0f0f0"></div>
<div class="t" style="left:88.67px;top:247.03px;font-size:11px;line-height:12px;color:#111">Start Competitor Analysis</div>
<div class="t" style="left:530px;top:247.03px;font-size:11px;line-height:12px;color:#111">The schedule is resource loaded, but this task does not have resources assigned</div>
<div class="a" style="left:501.33px;top:0;width:1px;height:300px;background:#f0f0f0"></div>
</div>
<div class="a" style="left:683.73px;top:81.4px;width:19.2px;height:19.2px;border-radius:50%;background:linear-gradient(180deg,#f6f6f6 0%,#dadada 55%,#b8b8b8 100%)"></div>
<div class="a" style="left:683.73px;top:103.27px;width:19.2px;height:19.2px;border-radius:50%;background:linear-gradient(180deg,#fcf862 0%,#e4da22 55%,#b6aa0e 100%)"></div>
<div class="a" style="left:683.73px;top:125.13px;width:19.2px;height:19.2px;border-radius:50%;background:linear-gradient(180deg,#c8f4c8 0%,#9ad69c 55%,#72b076 100%)"></div>
<div class="a" style="left:683.73px;top:147px;width:19.2px;height:19.2px;border-radius:50%;background:linear-gradient(180deg,#c8f4c8 0%,#9ad69c 55%,#72b076 100%)"></div>
<div class="a" style="left:683.73px;top:168.87px;width:19.2px;height:19.2px;border-radius:50%;background:linear-gradient(180deg,#f6f6f6 0%,#dadada 55%,#b8b8b8 100%)"></div>
<div class="a" style="left:683.73px;top:190.73px;width:19.2px;height:19.2px;border-radius:50%;background:linear-gradient(180deg,#fcf862 0%,#e4da22 55%,#b6aa0e 100%)"></div>
<div class="a" style="left:683.73px;top:212.6px;width:19.2px;height:19.2px;border-radius:50%;background:linear-gradient(180deg,#fcf862 0%,#e4da22 55%,#b6aa0e 100%)"></div>
<div class="a" style="left:683.73px;top:234.47px;width:19.2px;height:19.2px;border-radius:50%;background:linear-gradient(180deg,#fcf862 0%,#e4da22 55%,#b6aa0e 100%)"></div>
<div class="a" style="left:683.73px;top:256.33px;width:19.2px;height:19.2px;border-radius:50%;background:linear-gradient(180deg,#f6f6f6 0%,#dadada 55%,#b8b8b8 100%)"></div>
<div class="a" style="left:683.73px;top:278.2px;width:19.2px;height:19.2px;border-radius:50%;background:linear-gradient(180deg,#f6f6f6 0%,#dadada 55%,#b8b8b8 100%)"></div>
<div class="a" style="left:683.73px;top:300.07px;width:19.2px;height:19.2px;border-radius:50%;background:linear-gradient(180deg,#c8f4c8 0%,#9ad69c 55%,#72b076 100%)"></div>
<div class="a" style="left:683.73px;top:321.93px;width:19.2px;height:8.07px;overflow:hidden"><div class="a" style="left:0;top:0;width:19.2px;height:19.2px;border-radius:50%;background:linear-gradient(180deg,#f6f6f6 0%,#dadada 55%,#b8b8b8 100%)"></div></div>
<div class="a" style="left:1174.27px;top:57.87px;width:16.4px;height:272px;background:#f7f7f7"></div>
<div class="a" style="left:1174.27px;top:57.87px;width:16.4px;height:16.8px;background:#f0f0f0;border:1px solid #fff;border-right-color:#777;border-bottom-color:#777;box-shadow:inset -1px -1px 0 #a8a8a8"></div>
<svg class="a" style="left:1178px;top:64px;" width="9.33" height="5.33" viewBox="0 0 7 4"><path d="M0 4 L3.5 0 L7 4 Z" fill="#000"/></svg>
<div class="a" style="left:1174.27px;top:74.67px;width:16.4px;height:18px;background:#f0f0f0;border:1px solid #fff;border-right-color:#777;border-bottom-color:#777;box-shadow:inset -1px -1px 0 #a8a8a8"></div>
<div class="a" style="left:1174.27px;top:312.93px;width:16.4px;height:16.8px;background:#f0f0f0;border:1px solid #fff;border-right-color:#777;border-bottom-color:#777;box-shadow:inset -1px -1px 0 #a8a8a8"></div>
<svg class="a" style="left:1178px;top:319.33px;" width="9.33" height="5.33" viewBox="0 0 7 4"><path d="M0 0 L3.5 4 L7 0 Z" fill="#000"/></svg>
<div class="a" style="left:178px;top:330px;width:996px;height:16px;background:#f7f7f7"></div>
<div class="a" style="left:178px;top:330px;width:17.33px;height:16px;background:#f0f0f0;border:1px solid #fff;border-right-color:#777;border-bottom-color:#777;box-shadow:inset -1px -1px 0 #a8a8a8"></div>
<svg class="a" style="left:183.33px;top:333.33px;" width="5.33" height="9.33" viewBox="0 0 4 7"><path d="M4 0 L0 3.5 L4 7 Z" fill="#000"/></svg>
<div class="a" style="left:195.33px;top:330px;width:17.73px;height:16px;background:#f0f0f0;border:1px solid #fff;border-right-color:#777;border-bottom-color:#777;box-shadow:inset -1px -1px 0 #a8a8a8"></div>
<div class="a" style="left:1156.67px;top:330px;width:17.33px;height:16px;background:#f0f0f0;border:1px solid #fff;border-right-color:#777;border-bottom-color:#777;box-shadow:inset -1px -1px 0 #a8a8a8"></div>
<svg class="a" style="left:1163.33px;top:333.33px;" width="5.33" height="9.33" viewBox="0 0 4 7"><path d="M0 0 L4 3.5 L0 7 Z" fill="#000"/></svg>
<div class="a" style="left:1174.27px;top:330px;width:16.4px;height:16px;background:#f0f0f0"></div>
<div class="t" style="left:179.6px;top:353.17px;font-size:11px;line-height:11px;color:#111;letter-spacing:-0.03px">To view tasks with particular issues within a project schedule select the issues and click</div>
<div class="a" style="left:681.33px;top:348px;width:144.4px;height:18.67px;background:#efefef;border:1px solid #fff;border-right-color:#6a6a6a;border-bottom-color:#6a6a6a;box-shadow:inset -1px -1px 0 #a4a4a4;text-align:center;font-size:11px;line-height:17.5px;color:#111;letter-spacing:-0.2px;">Clear Selection and Close</div>
<div class="a" style="left:839.33px;top:348px;width:138.67px;height:18.67px;background:#efefef;border:1px solid #fff;border-right-color:#6a6a6a;border-bottom-color:#6a6a6a;box-shadow:inset -1px -1px 0 #a4a4a4;text-align:center;font-size:11px;line-height:17.5px;color:#111;">Configure</div>
<div class="a" style="left:178px;top:369.47px;width:342.93px;height:17.87px;border:1px solid #a0a0a0;background:#fff"></div>
<div class="t" style="left:113.07px;top:374.63px;font-size:11px;line-height:11px;width:400px;text-align:center;color:#111;letter-spacing:-0.2px;">DCMA 14 points schedule</div>
<div class="a" style="left:526px;top:369.73px;width:222px;height:18px;border:1px solid #a0a0a0;background:#fff"></div>
<div class="t" style="left:442px;top:374.97px;font-size:11px;line-height:11px;width:400px;text-align:center;color:#111;">Task Statistics</div>
<div class="a" style="left:755.33px;top:369.73px;width:222.67px;height:18px;border:1px solid #a0a0a0;background:#fff"></div>
<div class="t" style="left:664px;top:374.97px;font-size:11px;line-height:11px;width:400px;text-align:center;color:#111;letter-spacing:-0.08px;">Other schedule metrics</div>
<div class="a" style="left:982px;top:369.73px;width:208px;height:18px;border:1px solid #a0a0a0;background:#fff"></div>
<div class="t" style="left:894.13px;top:374.97px;font-size:11px;line-height:11px;width:400px;text-align:center;color:#111;letter-spacing:-0.15px;">Schedule Readiness Score</div>
<div class="a" style="left:178px;top:390.93px;width:36.93px;height:20.27px;background:#f0f0f0;border-top:1px solid #0a0a0a;border-bottom:1px solid #0a0a0a;border-right:1px solid #111;text-align:center;font-size:11px;line-height:20.5px;color:#111"></div>
<div class="a" style="left:214.93px;top:390.93px;width:195.73px;height:20.27px;background:#f0f0f0;border-top:1px solid #0a0a0a;border-bottom:1px solid #0a0a0a;border-right:1px solid #111;text-align:center;font-size:11px;line-height:20.5px;color:#111">Description</div>
<div class="a" style="left:410.67px;top:390.93px;width:50.67px;height:20.27px;background:#f0f0f0;border-top:1px solid #0a0a0a;border-bottom:1px solid #0a0a0a;border-right:1px solid #111;text-align:center;font-size:11px;line-height:20.5px;color:#111">Percent</div>
<div class="a" style="left:461.33px;top:390.93px;width:59.33px;height:20.27px;background:#f0f0f0;border-top:1px solid #0a0a0a;border-bottom:1px solid #0a0a0a;border-right:none;text-align:center;font-size:11px;line-height:20.5px;color:#111">Count</div>
<div class="a" style="left:178px;top:390.93px;width:1px;height:346.67px;background:#8c8c8c"></div>
<div class="a" style="left:178.67px;top:412.67px;width:341.33px;height:323.6px;overflow:hidden">
<div class="a" style="left:0;top:0.00px;width:36.27px;height:21.81px;background:#efefef;border-right:1px solid #9a9a9a;border-bottom:1px solid #a4a4a4;border-top:1px solid #fff;text-align:center;font-size:11px;line-height:20px;color:#111">1</div>
<div class="a" style="left:36.27px;top:20.81px;width:306.13px;height:1px;background:#f0f0f0"></div>
<div class="t" style="left:63.33px;top:5.30px;font-size:11px;line-height:12px;color:#111;width:168px;overflow:hidden">DCMA 1: Missing Logic</div>
<div class="t" style="left:232.67px;top:5.30px;font-size:11px;line-height:12px;color:#111;width:50.67px;text-align:center">3.03%</div>
<div class="t" style="left:283.07px;top:5.30px;font-size:11px;line-height:12px;color:#111;width:58.67px;text-align:center">1</div>
<div class="a" style="left:0;top:21.81px;width:36.27px;height:21.81px;background:#efefef;border-right:1px solid #9a9a9a;border-bottom:1px solid #a4a4a4;border-top:1px solid #fff;text-align:center;font-size:11px;line-height:20px;color:#111">2</div>
<div class="a" style="left:36.27px;top:42.63px;width:306.13px;height:1px;background:#f0f0f0"></div>
<div class="t" style="left:63.33px;top:27.11px;font-size:11px;line-height:12px;color:#111;width:168px;overflow:hidden">DCMA 2: Leads</div>
<div class="t" style="left:232.67px;top:27.11px;font-size:11px;line-height:12px;color:#111;width:50.67px;text-align:center">0.00%</div>
<div class="t" style="left:283.07px;top:27.11px;font-size:11px;line-height:12px;color:#111;width:58.67px;text-align:center">0</div>
<div class="a" style="left:0;top:43.63px;width:36.27px;height:21.81px;background:#efefef;border-right:1px solid #9a9a9a;border-bottom:1px solid #a4a4a4;border-top:1px solid #fff;text-align:center;font-size:11px;line-height:20px;color:#111">3</div>
<div class="a" style="left:36.27px;top:64.44px;width:306.13px;height:1px;background:#f0f0f0"></div>
<div class="t" style="left:63.33px;top:48.93px;font-size:11px;line-height:12px;color:#111;width:168px;overflow:hidden">DCMA 3: Lags</div>
<div class="t" style="left:232.67px;top:48.93px;font-size:11px;line-height:12px;color:#111;width:50.67px;text-align:center">1.75%</div>
<div class="t" style="left:283.07px;top:48.93px;font-size:11px;line-height:12px;color:#111;width:58.67px;text-align:center">1</div>
<div class="a" style="left:0;top:65.44px;width:36.27px;height:21.81px;background:#efefef;border-right:1px solid #9a9a9a;border-bottom:1px solid #a4a4a4;border-top:1px solid #fff;text-align:center;font-size:11px;line-height:20px;color:#111">4</div>
<div class="a" style="left:36.27px;top:86.25px;width:306.13px;height:1px;background:#f0f0f0"></div>
<div class="t" style="left:63.33px;top:70.74px;font-size:11px;line-height:12px;color:#111;width:168px;overflow:hidden">DCMA 4: Relationship Types</div>
<div class="t" style="left:232.67px;top:70.74px;font-size:11px;line-height:12px;color:#111;width:50.67px;text-align:center">89.47%</div>
<div class="t" style="left:283.07px;top:70.74px;font-size:11px;line-height:12px;color:#111;width:58.67px;text-align:center">51</div>
<div class="a" style="left:0;top:87.25px;width:36.27px;height:21.81px;background:#efefef;border-right:1px solid #9a9a9a;border-bottom:1px solid #a4a4a4;border-top:1px solid #fff;text-align:center;font-size:11px;line-height:20px;color:#111">5</div>
<div class="a" style="left:36.27px;top:108.07px;width:306.13px;height:1px;background:#f0f0f0"></div>
<div class="t" style="left:63.33px;top:92.55px;font-size:11px;line-height:12px;color:#111;width:168px;overflow:hidden">DCMA 5: Hard Constraints</div>
<div class="t" style="left:232.67px;top:92.55px;font-size:11px;line-height:12px;color:#111;width:50.67px;text-align:center">0.00%</div>
<div class="t" style="left:283.07px;top:92.55px;font-size:11px;line-height:12px;color:#111;width:58.67px;text-align:center">0</div>
<div class="a" style="left:0;top:109.07px;width:36.27px;height:21.81px;background:#efefef;border-right:1px solid #9a9a9a;border-bottom:1px solid #a4a4a4;border-top:1px solid #fff;text-align:center;font-size:11px;line-height:20px;color:#111">6</div>
<div class="a" style="left:36.27px;top:129.88px;width:306.13px;height:1px;background:#f0f0f0"></div>
<div class="t" style="left:63.33px;top:114.37px;font-size:11px;line-height:12px;color:#111;width:168px;overflow:hidden">DCMA 6: High Float</div>
<div class="t" style="left:232.67px;top:114.37px;font-size:11px;line-height:12px;color:#111;width:50.67px;text-align:center">0.00%</div>
<div class="t" style="left:283.07px;top:114.37px;font-size:11px;line-height:12px;color:#111;width:58.67px;text-align:center">0</div>
<div class="a" style="left:0;top:130.88px;width:36.27px;height:21.81px;background:#efefef;border-right:1px solid #9a9a9a;border-bottom:1px solid #a4a4a4;border-top:1px solid #fff;text-align:center;font-size:11px;line-height:20px;color:#111">7</div>
<div class="a" style="left:36.27px;top:151.69px;width:306.13px;height:1px;background:#f0f0f0"></div>
<div class="t" style="left:63.33px;top:136.18px;font-size:11px;line-height:12px;color:#111;width:168px;overflow:hidden">DCMA 7: Negative Float</div>
<div class="t" style="left:232.67px;top:136.18px;font-size:11px;line-height:12px;color:#111;width:50.67px;text-align:center">54.55%</div>
<div class="t" style="left:283.07px;top:136.18px;font-size:11px;line-height:12px;color:#111;width:58.67px;text-align:center">18</div>
<div class="a" style="left:0;top:152.69px;width:36.27px;height:21.81px;background:#efefef;border-right:1px solid #9a9a9a;border-bottom:1px solid #a4a4a4;border-top:1px solid #fff;text-align:center;font-size:11px;line-height:20px;color:#111">8</div>
<div class="a" style="left:36.27px;top:173.51px;width:306.13px;height:1px;background:#f0f0f0"></div>
<div class="t" style="left:63.33px;top:157.99px;font-size:11px;line-height:12px;color:#111;width:168px;overflow:hidden">DCMA 8: High duration</div>
<div class="t" style="left:232.67px;top:157.99px;font-size:11px;line-height:12px;color:#111;width:50.67px;text-align:center">0.00%</div>
<div class="t" style="left:283.07px;top:157.99px;font-size:11px;line-height:12px;color:#111;width:58.67px;text-align:center">0</div>
<div class="a" style="left:0;top:174.51px;width:36.27px;height:21.81px;background:#efefef;border-right:1px solid #9a9a9a;border-bottom:1px solid #a4a4a4;border-top:1px solid #fff;text-align:center;font-size:11px;line-height:20px;color:#111">9</div>
<div class="a" style="left:36.27px;top:195.32px;width:306.13px;height:1px;background:#f0f0f0"></div>
<div class="t" style="left:63.33px;top:179.81px;font-size:11px;line-height:12px;color:#111;width:168px;overflow:hidden">DCMA 9A: Invalid Forecast Dates</div>
<div class="t" style="left:232.67px;top:179.81px;font-size:11px;line-height:12px;color:#111;width:50.67px;text-align:center">0.00%</div>
<div class="t" style="left:283.07px;top:179.81px;font-size:11px;line-height:12px;color:#111;width:58.67px;text-align:center">0</div>
<div class="a" style="left:0;top:196.32px;width:36.27px;height:21.81px;background:#efefef;border-right:1px solid #9a9a9a;border-bottom:1px solid #a4a4a4;border-top:1px solid #fff;text-align:center;font-size:11px;line-height:20px;color:#111">10</div>
<div class="a" style="left:36.27px;top:217.13px;width:306.13px;height:1px;background:#f0f0f0"></div>
<div class="t" style="left:63.33px;top:201.62px;font-size:11px;line-height:12px;color:#111;width:168px;overflow:hidden">DCMA 9B: Invalid Actual Dates</div>
<div class="t" style="left:232.67px;top:201.62px;font-size:11px;line-height:12px;color:#111;width:50.67px;text-align:center">0.00%</div>
<div class="t" style="left:283.07px;top:201.62px;font-size:11px;line-height:12px;color:#111;width:58.67px;text-align:center">0</div>
<div class="a" style="left:0;top:218.13px;width:36.27px;height:21.81px;background:#efefef;border-right:1px solid #9a9a9a;border-bottom:1px solid #a4a4a4;border-top:1px solid #fff;text-align:center;font-size:11px;line-height:20px;color:#111">11</div>
<div class="a" style="left:36.27px;top:238.95px;width:306.13px;height:1px;background:#f0f0f0"></div>
<div class="t" style="left:63.33px;top:223.43px;font-size:11px;line-height:12px;color:#111;width:168px;overflow:hidden">DCMA 10: Resources</div>
<div class="t" style="left:232.67px;top:223.43px;font-size:11px;line-height:12px;color:#111;width:50.67px;text-align:center">0.00%</div>
<div class="t" style="left:283.07px;top:223.43px;font-size:11px;line-height:12px;color:#111;width:58.67px;text-align:center">0</div>
<div class="a" style="left:0;top:239.95px;width:36.27px;height:21.81px;background:#efefef;border-right:1px solid #9a9a9a;border-bottom:1px solid #a4a4a4;border-top:1px solid #fff;text-align:center;font-size:11px;line-height:20px;color:#111">12</div>
<div class="a" style="left:36.27px;top:260.76px;width:306.13px;height:1px;background:#f0f0f0"></div>
<div class="t" style="left:63.33px;top:245.25px;font-size:11px;line-height:12px;color:#111;width:168px;overflow:hidden">DCMA 11: Missed Tasks</div>
<div class="t" style="left:232.67px;top:245.25px;font-size:11px;line-height:12px;color:#111;width:50.67px;text-align:center">0.00%</div>
<div class="t" style="left:283.07px;top:245.25px;font-size:11px;line-height:12px;color:#111;width:58.67px;text-align:center">0</div>
<div class="a" style="left:0;top:261.76px;width:36.27px;height:21.81px;background:#efefef;border-right:1px solid #9a9a9a;border-bottom:1px solid #a4a4a4;border-top:1px solid #fff;text-align:center;font-size:11px;line-height:20px;color:#111">13</div>
<div class="a" style="left:36.27px;top:282.57px;width:306.13px;height:1px;background:#f0f0f0"></div>
<div class="t" style="left:63.33px;top:267.06px;font-size:11px;line-height:12px;color:#111;width:168px;overflow:hidden">DCMA 12: Critical Path</div>
<div class="t" style="left:232.67px;top:267.06px;font-size:11px;line-height:12px;color:#111;width:50.67px;text-align:center"></div>
<div class="t" style="left:283.07px;top:267.06px;font-size:11px;line-height:12px;color:#111;width:58.67px;text-align:center"></div>
<div class="a" style="left:0;top:283.57px;width:36.27px;height:21.81px;background:#efefef;border-right:1px solid #9a9a9a;border-bottom:1px solid #a4a4a4;border-top:1px solid #fff;text-align:center;font-size:11px;line-height:20px;color:#111">14</div>
<div class="a" style="left:36.27px;top:304.39px;width:306.13px;height:1px;background:#f0f0f0"></div>
<div class="t" style="left:63.33px;top:288.87px;font-size:11px;line-height:12px;color:#111;width:168px;overflow:hidden">DCMA 13*: CPLI-right click to sele</div>
<div class="t" style="left:232.67px;top:288.87px;font-size:11px;line-height:12px;color:#111;width:50.67px;text-align:center"></div>
<div class="t" style="left:283.07px;top:288.87px;font-size:11px;line-height:12px;color:#111;width:58.67px;text-align:center"></div>
<div class="a" style="left:0;top:305.39px;width:36.27px;height:21.81px;background:#efefef;border-right:1px solid #9a9a9a;border-bottom:1px solid #a4a4a4;border-top:1px solid #fff;text-align:center;font-size:11px;line-height:20px;color:#111">15</div>
<div class="a" style="left:36.27px;top:326.20px;width:306.13px;height:1px;background:#f0f0f0"></div>
<div class="t" style="left:63.33px;top:310.69px;font-size:11px;line-height:12px;color:#111;width:168px;overflow:hidden">DCMA 14: BEI</div>
<div class="t" style="left:232.67px;top:310.69px;font-size:11px;line-height:12px;color:#111;width:50.67px;text-align:center">0.00%</div>
<div class="t" style="left:283.07px;top:310.69px;font-size:11px;line-height:12px;color:#111;width:58.67px;text-align:center">0</div>
<div class="a" style="left:230.67px;top:0;width:1px;height:340px;background:#f0f0f0"></div>
<div class="a" style="left:281.33px;top:0;width:1px;height:340px;background:#f0f0f0"></div>
</div>
<div class="a" style="left:216.4px;top:414.53px;width:19.2px;height:19.2px;border-radius:50%;background:linear-gradient(180deg,#fcf862 0%,#e4da22 55%,#b6aa0e 100%)"></div>
<div class="a" style="left:216.4px;top:436.35px;width:19.2px;height:19.2px;border-radius:50%;background:linear-gradient(180deg,#c8f4c8 0%,#9ad69c 55%,#72b076 100%)"></div>
<div class="a" style="left:216.4px;top:458.16px;width:19.2px;height:19.2px;border-radius:50%;background:linear-gradient(180deg,#c8f4c8 0%,#9ad69c 55%,#72b076 100%)"></div>
<div class="a" style="left:216.4px;top:479.97px;width:19.2px;height:19.2px;border-radius:50%;background:linear-gradient(180deg,#f4a4a4 0%,#de6666 55%,#bc4848 100%)"></div>
<div class="a" style="left:216.4px;top:501.79px;width:19.2px;height:19.2px;border-radius:50%;background:linear-gradient(180deg,#c8f4c8 0%,#9ad69c 55%,#72b076 100%)"></div>
<div class="a" style="left:216.4px;top:523.6px;width:19.2px;height:19.2px;border-radius:50%;background:linear-gradient(180deg,#c8f4c8 0%,#9ad69c 55%,#72b076 100%)"></div>
<div class="a" style="left:216.4px;top:545.41px;width:19.2px;height:19.2px;border-radius:50%;background:linear-gradient(180deg,#f4a4a4 0%,#de6666 55%,#bc4848 100%)"></div>
<div class="a" style="left:216.4px;top:567.23px;width:19.2px;height:19.2px;border-radius:50%;background:linear-gradient(180deg,#c8f4c8 0%,#9ad69c 55%,#72b076 100%)"></div>
<div class="a" style="left:216.4px;top:589.04px;width:19.2px;height:19.2px;border-radius:50%;background:linear-gradient(180deg,#c8f4c8 0%,#9ad69c 55%,#72b076 100%)"></div>
<div class="a" style="left:216.4px;top:610.85px;width:19.2px;height:19.2px;border-radius:50%;background:linear-gradient(180deg,#c8f4c8 0%,#9ad69c 55%,#72b076 100%)"></div>
<div class="a" style="left:216.4px;top:632.67px;width:19.2px;height:19.2px;border-radius:50%;background:linear-gradient(180deg,#c8f4c8 0%,#9ad69c 55%,#72b076 100%)"></div>
<div class="a" style="left:216.4px;top:654.48px;width:19.2px;height:19.2px;border-radius:50%;background:linear-gradient(180deg,#c8f4c8 0%,#9ad69c 55%,#72b076 100%)"></div>
<div class="a" style="left:216.4px;top:676.29px;width:19.2px;height:19.2px;border-radius:50%;background:linear-gradient(180deg,#f6f6f6 0%,#dadada 55%,#b8b8b8 100%)"></div>
<div class="a" style="left:216.4px;top:698.11px;width:19.2px;height:19.2px;border-radius:50%;background:linear-gradient(180deg,#f6f6f6 0%,#dadada 55%,#b8b8b8 100%)"></div>
<div class="a" style="left:216.4px;top:719.92px;width:19.2px;height:16.35px;overflow:hidden"><div class="a" style="left:0;top:0;width:19.2px;height:19.2px;border-radius:50%;background:linear-gradient(180deg,#f4a4a4 0%,#de6666 55%,#bc4848 100%)"></div></div>
<div class="t" style="left:182.67px;top:745.17px;font-size:11px;line-height:11px;color:#111">Double click on the row to view detailed information about the metric</div>
<div class="a" style="left:526px;top:390.67px;width:221.6px;height:364.8px;border:1px solid #a0a0a0;background:#fff"></div>
<div class="a" style="left:755.33px;top:390.67px;width:221.87px;height:364.8px;border:1px solid #a0a0a0;background:#fff"></div>
<div class="t" style="left:538.4px;top:401.97px;font-size:11px;line-height:11px;color:#111;">Total</div>
<div class="t" style="left:700px;top:400.50px;font-size:11px;line-height:11px;color:#111">60</div>
<div class="t" style="left:538.4px;top:426.23px;font-size:11px;line-height:11px;color:#111;letter-spacing:-0.22px;">Completed</div>
<div class="t" style="left:700px;top:426.23px;font-size:11px;line-height:11px;color:#111">0</div>
<div class="t" style="left:538.4px;top:453.03px;font-size:11px;line-height:11px;color:#111;letter-spacing:-0.22px;">Partially Completed</div>
<div class="t" style="left:700px;top:453.03px;font-size:11px;line-height:11px;color:#111">0</div>
<div class="t" style="left:538.4px;top:479.30px;font-size:11px;line-height:11px;color:#111;">Tasks Not Started:</div>
<div class="t" style="left:700px;top:478.10px;font-size:11px;line-height:11px;color:#111">60</div>
<div class="t" style="left:538.4px;top:506.10px;font-size:11px;line-height:11px;color:#111;">Tasks with</div>
<div class="t" style="left:700px;top:506.10px;font-size:11px;line-height:11px;color:#111">15</div>
<div class="t" style="left:538.4px;top:532.90px;font-size:11px;line-height:11px;color:#111;">Tasks with</div>
<div class="t" style="left:700px;top:532.90px;font-size:11px;line-height:11px;color:#111">10</div>
<div class="t" style="left:538.4px;top:559.70px;font-size:11px;line-height:11px;color:#111;">Tasks with</div>
<div class="t" style="left:700px;top:559.70px;font-size:11px;line-height:11px;color:#111">9</div>
<div class="t" style="left:538.4px;top:587.43px;font-size:11px;line-height:11px;color:#111;">Tasks with</div>
<div class="t" style="left:700px;top:587.43px;font-size:11px;line-height:11px;color:#111">33</div>
<div class="t" style="left:538.4px;top:615.83px;font-size:11px;line-height:11px;color:#111;">Tasks with Cost &gt; 0:</div>
<div class="t" style="left:700px;top:615.83px;font-size:11px;line-height:11px;color:#111">43</div>
<div class="t" style="left:538.4px;top:641.03px;font-size:11px;line-height:11px;color:#111;">Tasks with Income &gt; 0:</div>
<div class="t" style="left:700px;top:641.03px;font-size:11px;line-height:11px;color:#111">0</div>
<div class="t" style="left:538.4px;top:667.97px;font-size:11px;line-height:11px;color:#111;">Milestones:</div>
<div class="t" style="left:700px;top:667.97px;font-size:11px;line-height:11px;color:#111">17</div>
<div class="t" style="left:538.4px;top:694.77px;font-size:11px;line-height:11px;color:#111;">Summary</div>
<div class="t" style="left:700px;top:694.77px;font-size:11px;line-height:11px;color:#111">10</div>
<div class="t" style="left:538.4px;top:721.57px;font-size:11px;line-height:11px;color:#111;">Tasks with</div>
<div class="t" style="left:700px;top:721.57px;font-size:11px;line-height:11px;color:#111">0</div>
<div class="t" style="left:769.07px;top:400.37px;font-size:11px;line-height:11px;color:#111;letter-spacing:-0.1px">Total</div>
<div class="t" style="left:927.87px;top:400.37px;font-size:11px;line-height:11px;color:#111">57</div>
<div class="t" style="left:769.07px;top:424.37px;font-size:11px;line-height:11px;color:#111;letter-spacing:-0.1px">Summary Tasks with</div>
<div class="t" style="left:927.87px;top:424.37px;font-size:11px;line-height:11px;color:#111">6</div>
<div class="t" style="left:769.07px;top:451.17px;font-size:11px;line-height:11px;color:#111;letter-spacing:-0.1px">Tasks without</div>
<div class="t" style="left:927.87px;top:451.17px;font-size:11px;line-height:11px;color:#111">1</div>
<div class="t" style="left:769.07px;top:477.97px;font-size:11px;line-height:11px;color:#111;letter-spacing:-0.1px">Finish-Start</div>
<div class="t" style="left:927.87px;top:477.97px;font-size:11px;line-height:11px;color:#111">51</div>
<div class="t" style="left:769.07px;top:504.77px;font-size:11px;line-height:11px;color:#111;letter-spacing:-0.1px">Start-Start&nbsp; Links:</div>
<div class="t" style="left:927.87px;top:504.77px;font-size:11px;line-height:11px;color:#111">4</div>
<div class="t" style="left:769.07px;top:531.70px;font-size:11px;line-height:11px;color:#111;letter-spacing:-0.1px">Finish-Finish</div>
<div class="t" style="left:927.87px;top:531.70px;font-size:11px;line-height:11px;color:#111">2</div>
<div class="t" style="left:769.07px;top:559.70px;font-size:11px;line-height:11px;color:#111;letter-spacing:-0.1px">Start-Finish</div>
<div class="t" style="left:927.87px;top:559.70px;font-size:11px;line-height:11px;color:#111">0</div>
<div class="t" style="left:769.07px;top:587.43px;font-size:11px;line-height:11px;color:#111;letter-spacing:-0.1px">Number of Base</div>
<div class="t" style="left:927.87px;top:587.43px;font-size:11px;line-height:11px;color:#111">1</div>
<div class="t" style="left:769.07px;top:612.37px;font-size:11px;line-height:11px;color:#111;letter-spacing:-0.1px">Tasks with Task</div>
<div class="t" style="left:927.87px;top:612.37px;font-size:11px;line-height:11px;color:#111">0</div>
<div class="t" style="left:769.07px;top:639.17px;font-size:11px;line-height:11px;color:#111;letter-spacing:-0.1px">Number of</div>
<div class="t" style="left:927.87px;top:639.17px;font-size:11px;line-height:11px;color:#111">4</div>
<div class="t" style="left:769.07px;top:665.97px;font-size:11px;line-height:11px;color:#111;letter-spacing:-0.1px">Number of Material</div>
<div class="t" style="left:927.87px;top:665.97px;font-size:11px;line-height:11px;color:#111">0</div>
<div class="t" style="left:769.07px;top:692.90px;font-size:11px;line-height:11px;color:#111;letter-spacing:-0.1px">Number of Work</div>
<div class="t" style="left:927.87px;top:692.90px;font-size:11px;line-height:11px;color:#111">4</div>
<div class="t" style="left:769.07px;top:721.57px;font-size:11px;line-height:11px;color:#111;letter-spacing:-0.1px">Number of Cost</div>
<div class="t" style="left:927.87px;top:721.57px;font-size:11px;line-height:11px;color:#111">0</div>
<div class="a" style="left:982px;top:390.67px;width:205.73px;height:204.93px;background:linear-gradient(180deg,#f2f2f2,#b2b2b2)"></div>
<svg class="a" style="left:0;top:0" width="1366" height="788" viewBox="0 0 1024.5 591"><defs><linearGradient id="bg" x1="0" y1="0" x2="0" y2="1"><stop offset="0" stop-color="#0000e8"/><stop offset="1" stop-color="#000096"/></linearGradient><linearGradient id="hub" x1="0" y1="0" x2="1" y2="1"><stop offset="0" stop-color="#b4b4c8"/><stop offset="1" stop-color="#80809a"/></linearGradient><linearGradient id="vb" x1="0" y1="0" x2="0" y2="1"><stop offset="0" stop-color="#0000e0"/><stop offset="1" stop-color="#00008c"/></linearGradient></defs><path d="M752.45 405.55 A70.5 70.5 0 0 1 854.94 313.26 L847.00 324.19 A57 57 0 0 0 764.14 398.80 Z" fill="#ffc0c0"/><path d="M854.94 313.26 A70.5 70.5 0 0 1 874.55 405.55 L862.86 398.80 A57 57 0 0 0 847.00 324.19 Z" fill="#ff6464"/><circle cx="813.5" cy="370.3" r="58" fill="url(#bg)"/><path d="M845.43 324.90 L803.58 393.83 L795.02 387.93 L844.60 324.33 Z" fill="#e4e4f4"/><circle cx="813.5" cy="370.3" r="13" fill="url(#hub)"/><rect x="764.5" y="405.6" width="98" height="35.4" fill="url(#vb)" stroke="#d4d4fa" stroke-width="1"/><text x="812.4" y="429.6" text-anchor="middle" font-family="Liberation Sans, sans-serif" font-weight="bold" font-size="18.6" fill="#fff">64%</text></svg>
<div class="a" style="left:982px;top:610.67px;width:208px;height:58.4px;border:1px solid #a0a0a0;background:#fff"></div>
<div class="t" style="left:994px;top:617.6px;font-size:11px;line-height:13.7px;color:#111">Schedule readiness<br>for Monte Carlo<br>simulations:</div>
<div class="t" style="left:1118.67px;top:630.67px;font-size:12px;line-height:12px;color:#111">Medium</div>
<div class="a" style="left:646.67px;top:759.07px;width:74px;height:18.67px;background:#efefef;border:1px solid #fff;border-right-color:#6a6a6a;border-bottom-color:#6a6a6a;box-shadow:inset -1px -1px 0 #a4a4a4;text-align:center;font-size:11px;line-height:17.5px;color:#111;">OK</div>
</div></body></html>
